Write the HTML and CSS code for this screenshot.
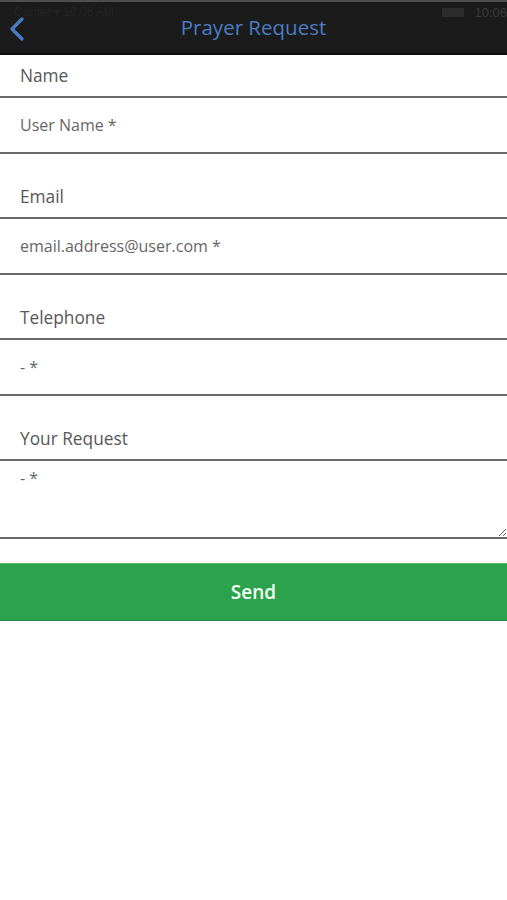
FILE: index.html
```html
<!DOCTYPE html>
<html>
<head>
<meta charset="utf-8">
<link rel="stylesheet" href="styles.css">
</head>
<body>
<header class="topbar">
  <div class="status">
    <span class="carrier">Carrier ▾ 10:06 AM</span>
    <span class="status-right"><span class="battery"></span><span class="clock">10:06</span></span>
  </div>
  <div class="nav">
    <svg class="back" width="18" height="26" viewBox="0 0 18 26"><path d="M14 3 L4 13 L14 23" fill="none" stroke="#4a7cc4" stroke-width="3.2" stroke-linecap="round" stroke-linejoin="round"/></svg>
    <h1 class="title">Prayer Request</h1>
  </div>
</header>
<form class="form">
  <div class="group first">
    <label class="label">Name</label>
    <input class="field" type="text" placeholder="User Name *">
  </div>
  <div class="group">
    <label class="label">Email</label>
    <input class="field" type="text" placeholder="email.address@user.com *">
  </div>
  <div class="group">
    <label class="label">Telephone</label>
    <input class="field" type="text" placeholder="- *">
  </div>
  <div class="group">
    <label class="label">Your Request</label>
    <textarea class="field area" placeholder="- *"></textarea>
  </div>
  <button class="send" type="button">Send</button>
</form>
</body>
</html>
```
FILE: styles.css
```css
html, body {
  margin: 0;
  padding: 0;
  background: #ffffff;
  font-family: "Open Sans", Lato, sans-serif;
}
.topbar {
  background: #1b1b1b;
  border-top: 2px solid #4e4e4e;
  border-bottom: 2px solid #0e0e0e;
  height: 51px;
  position: relative;
}
.status {
  display: flex;
  justify-content: space-between;
  align-items: center;
  height: 20px;
  padding: 0 0 0 14px;
  font-family: "Liberation Sans", Arial, sans-serif;
  font-size: 12px;
  color: #2a2a2a;
}
.carrier { color: #242424; }
.status-right { display: flex; align-items: center; gap: 10px; }
.battery {
  display: inline-block;
  width: 22px;
  height: 9px;
  background: #2c2c2c;
}
.clock { color: #3a3a3a; font-size: 13px; }
.nav {
  position: absolute;
  left: 0;
  right: 0;
  top: 8px;
  height: 34px;
  display: flex;
  align-items: center;
  justify-content: center;
}
.back {
  position: absolute;
  left: 8px;
  top: 6px;
}
.title {
  margin: 0;
  font-family: "Open Sans", Lato, sans-serif;
  font-weight: 400;
  font-size: 20.5px;
  color: #4a7cc4;
}
.form {
  display: flex;
  flex-direction: column;
}
.group {
  display: flex;
  flex-direction: column;
  margin-top: 22px;
}
.group.first { margin-top: 0; }
.label {
  height: 41px;
  display: flex;
  align-items: center;
  padding-left: 20px;
  font-family: "Open Sans", Lato, sans-serif;
  font-size: 17.3px;
  color: #575757;
}
.field {
  box-sizing: border-box;
  width: 100%;
  height: 58px;
  margin: 0;
  border: none;
  border-top: 2px solid #6a6a6a;
  border-bottom: 2px solid #6a6a6a;
  border-radius: 0;
  padding: 0 0 0 20px;
  font-family: "Open Sans", Lato, sans-serif;
  font-size: 16px;
  color: #444;
  background: #ffffff;
  outline: none;
}
.field::placeholder { color: #666666; }
.area {
  height: 80px;
  padding-top: 6px;
  resize: vertical;
  display: block;
}
.send {
  margin-top: 24px;
  height: 58px;
  border: none;
  border-top: 1px solid #53c06f;
  border-bottom: 1px solid #1e8a3c;
  background: #2ba24c;
  color: #f4fff6;
  font-family: "Open Sans", Lato, sans-serif;
  font-weight: 600;
  font-size: 19px;
  width: 100%;
}
```
